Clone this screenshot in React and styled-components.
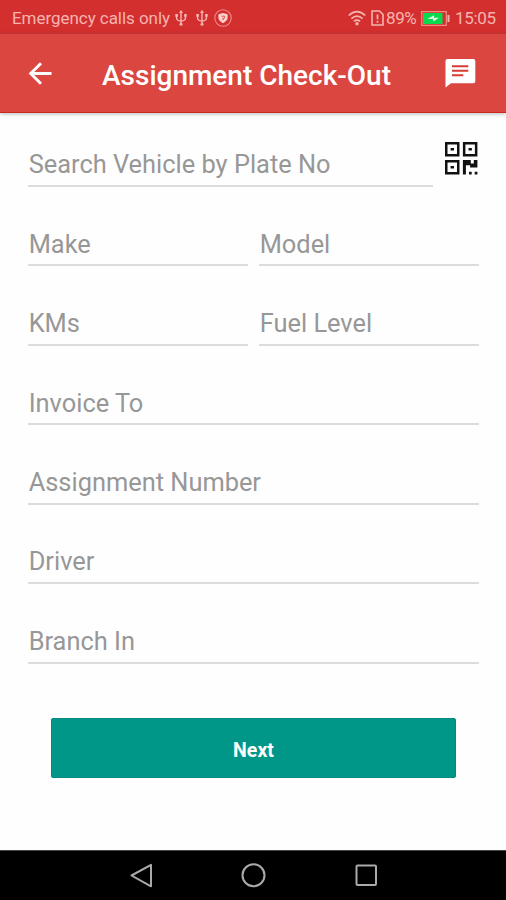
import React from "react";
import styled, { createGlobalStyle } from "styled-components";

const GlobalStyle = createGlobalStyle`
  *, *::before, *::after { box-sizing: border-box; }
  body { margin: 0; background: #fefefe; font-family: Roboto, "Noto Sans", sans-serif; }
`;

const Screen = styled.div`
  width: 506px;
  height: 900px;
  display: flex;
  flex-direction: column;
  background: #fefefe;
  overflow: hidden;
`;

const StatusBar = styled.div`
  height: 34px;
  flex: none;
  display: flex;
  align-items: center;
  padding: 2px 10px 0 12px;
  background: #d32f2f;
  color: #f6b4b0;
  font-size: 17px;
  line-height: 20px;
  white-space: nowrap;
`;

const StatusText = styled.span`
  flex: none;
  width: ${(p) => p.$width}px;
  margin-left: ${(p) => p.$gap || 0}px;
  letter-spacing: ${(p) => p.$spacing || 0}px;
`;

const StatusIcon = styled.svg`
  display: block;
  flex: none;
  margin-left: ${(p) => p.$gap || 0}px;
`;

const Spacer = styled.div`
  flex: 1;
`;

const AppBar = styled.header`
  height: 79px;
  flex: none;
  display: flex;
  align-items: center;
  background: #db4740;
  border-bottom: 1.500px solid #c9281f;
  box-shadow: 0 1px 4px rgba(40, 60, 70, 0.35);
  padding: 0 30px 0 27px;
`;

const Title = styled.h1`
  flex: 1;
  margin: 5px 0 0 49px;
  font-size: 28px;
  line-height: 32px;
  font-weight: 500;
  color: #fff;
  white-space: nowrap;
`;

const IconButton = styled.button`
  display: block;
  padding: 0;
  border: 0;
  background: none;
  line-height: 0;
  svg { display: block; }
`;

const Form = styled.main`
  flex: 1;
  display: flex;
  flex-direction: column;
  padding: 23px 27px 0 28px;
`;

const Row = styled.div`
  display: flex;
  gap: 11px;
  height: 79.45px;
  flex: none;
`;

const Field = styled.div`
  flex: 1;
  height: 51px;
  padding-top: 13.300px;
  padding-left: 0.700px;
  border-bottom: 2px solid #dcdcdc;
  color: #979797;
  font-size: 25.4px;
  line-height: 30px;
  white-space: nowrap;
`;

const ScanButton = styled(IconButton)`
  width: 35px;
  height: 35px;
  margin-top: 5px;
`;

const NextButton = styled.button`
  width: 405px;
  height: 60px;
  margin: 26px 0 0 23px;
  padding: 4px 0 0;
  border: 1px solid #078a7c;
  border-radius: 2px;
  background: #009688;
  color: #fff;
  font-family: inherit;
  font-size: 19.5px;
  font-weight: 700;
`;

const NavBar = styled.nav`
  height: 50px;
  flex: none;
  display: flex;
  justify-content: center;
  align-items: center;
  gap: 84.5px;
  background: #000;
  border-top: 1px solid #444;
`;

const UsbIcon = ({ gap }) => (
  <StatusIcon $gap={gap} width="14" height="18" viewBox="0 0 14 18" fill="none" stroke="currentColor" strokeWidth="1.4">
    <path d="M7 3v12M2.600 7v2.200c0 1.800 1.200 2.400 4.400 3 3.200-.6 4.400-1.200 4.400-3V7" />
    <path d="M7 .8 9 4H5zM1.300 5h2.600v2.700H1.300zM10.100 5h2.600v2.700h-2.600z" fill="currentColor" stroke="none" />
    <circle cx="7" cy="15.200" r="1.500" fill="currentColor" stroke="none" />
  </StatusIcon>
);

const ShieldIcon = () => (
  <StatusIcon $gap={4.5} width="18" height="18" viewBox="0 0 18 18">
    <circle cx="9" cy="9" r="8.200" fill="none" stroke="currentColor" strokeWidth="1.100" opacity=".7" />
    <path d="M9 4 13.600 5.200v3.300c0 2.500-2 4.200-4.600 5.700-2.600-1.500-4.600-3.200-4.600-5.700V5.200z" fill="#ffd0ce" />
    <path d="M7.500 7.200h3v1.500L9 10.800V8.600" fill="none" stroke="#d9544f" strokeWidth="1" />
  </StatusIcon>
);

const WifiIcon = () => (
  <StatusIcon width="18" height="16" viewBox="0 0 18 16" fill="none" stroke="currentColor" strokeWidth="1.700">
    <path d="M.7 5.500Q9-2.200 17.300 5.500M3.400 8.600q5.600-5 11.200 0M5.900 11.300q3.100-2.500 6.200 0" />
    <circle cx="9" cy="13.800" r="1.700" fill="currentColor" stroke="none" />
  </StatusIcon>
);

const SimIcon = () => (
  <StatusIcon $gap={4.5} width="13" height="16" viewBox="0 0 13 16" fill="none" stroke="currentColor" strokeWidth="1.600">
    <path d="M1 1h7.500L12 4.500V15H1z" />
    <path d="M6.500 4.500v4.700M6.500 10.700v2" strokeWidth="1.700" />
  </StatusIcon>
);

const BatteryIcon = () => (
  <StatusIcon $gap={4} width="29" height="15" viewBox="0 0 29 15">
    <path d="M.7.7h24.600v13.600H.7z" fill="none" stroke="#ee8c82" strokeWidth="1.200" />
    <path d="M2 2h19.500v11H2z" fill="#08d94d" />
    <path d="M26.500 4h2v7h-2z" fill="#f6b4b0" />
    <path d="M6.500 8 13 4.300v2.400h5L12.200 10.500V8z" fill="#e6ffe9" />
  </StatusIcon>
);

const QrIcon = () => (
  <svg width="35" height="35" viewBox="0 0 35 35">
    <g fill="none" stroke="#111" strokeWidth="2.500">
      <path d="M2.250 2.150h12v12h-12zM20.150 2.150h12v12h-12zM2.250 20.350h12v12h-12z" />
    </g>
    <g fill="#111">
      <path d="M6.600 6.900h3.400v2.500H6.600zM24.500 6.900h3.400v2.500h-3.400zM6.600 25.100h3.400v2.500H6.600z" />
      <path d="M18.900 19.100h7.900v3.400h3v-3.400h3.600v7.300h-7.300v-2.100h-4.200v9.300h-3zM25 30.800h2.700v2.700H25zM30.700 30.800h2.700v2.700h-2.700z" />
    </g>
  </svg>
);

const fieldRows = [
  ["Make", "Model"],
  ["KMs", "Fuel Level"],
  ["Invoice To"],
  ["Assignment Number"],
  ["Driver"],
  ["Branch In"],
];

export default function App() {
  return (
    <Screen>
      <GlobalStyle />
      <StatusBar>
        <StatusText $width={162} $spacing={-0.05}>Emergency calls only</StatusText>
        <UsbIcon />
        <UsbIcon gap={7} />
        <ShieldIcon />
        <Spacer />
        <WifiIcon />
        <SimIcon />
        <StatusText $width={31} $gap={2.5} $spacing={-0.4}>89%</StatusText>
        <BatteryIcon />
        <StatusText $width={41} $gap={5} $spacing={-0.3}>15:05</StatusText>
      </StatusBar>
      <AppBar>
        <IconButton aria-label="Back">
          <svg width="26" height="26" viewBox="0 0 26 26" fill="none" stroke="#fff" strokeWidth="2.900">
            <path d="M24.500 13.500H4M14 3.200 3.700 13.500 14 23.800" />
          </svg>
        </IconButton>
        <Title>Assignment Check-Out</Title>
        <IconButton aria-label="Messages">
          <svg width="32" height="30" viewBox="0 0 32 30">
            <path d="M3.500 1h25.800q2 0 2 2v20.200q0 2-2 2H7L1.500 29.500V3q0-2 2-2z" fill="#fff" />
            <path d="M8 7.200h16.300v2H8zM8 11.700h16.300v2H8zM8 16.200h11.300v2H8z" fill="#d63c35" />
          </svg>
        </IconButton>
      </AppBar>
      <Form>
        <Row>
          <Field>Search Vehicle by Plate No</Field>
          <ScanButton aria-label="Scan code">
            <QrIcon />
          </ScanButton>
        </Row>
        {fieldRows.map((row) => (
          <Row key={row[0]}>
            {row.map((label) => (
              <Field key={label}>{label}</Field>
            ))}
          </Row>
        ))}
        <NextButton>Next</NextButton>
      </Form>
      <NavBar>
        <svg width="28" height="28" viewBox="0 0 28 28" fill="none" stroke="#aaa" strokeWidth="2">
          <path d="M24 2.800v21.500L4.500 13.500z" strokeLinejoin="round" />
        </svg>
        <svg width="28" height="28" viewBox="0 0 28 28" fill="none" stroke="#aaa" strokeWidth="2">
          <circle cx="14.500" cy="13.300" r="11" />
        </svg>
        <svg width="28" height="28" viewBox="0 0 28 28" fill="none" stroke="#aaa" strokeWidth="2">
          <rect x="4.500" y="3.500" width="19.500" height="19.500" rx="1" />
        </svg>
      </NavBar>
    </Screen>
  );
}
